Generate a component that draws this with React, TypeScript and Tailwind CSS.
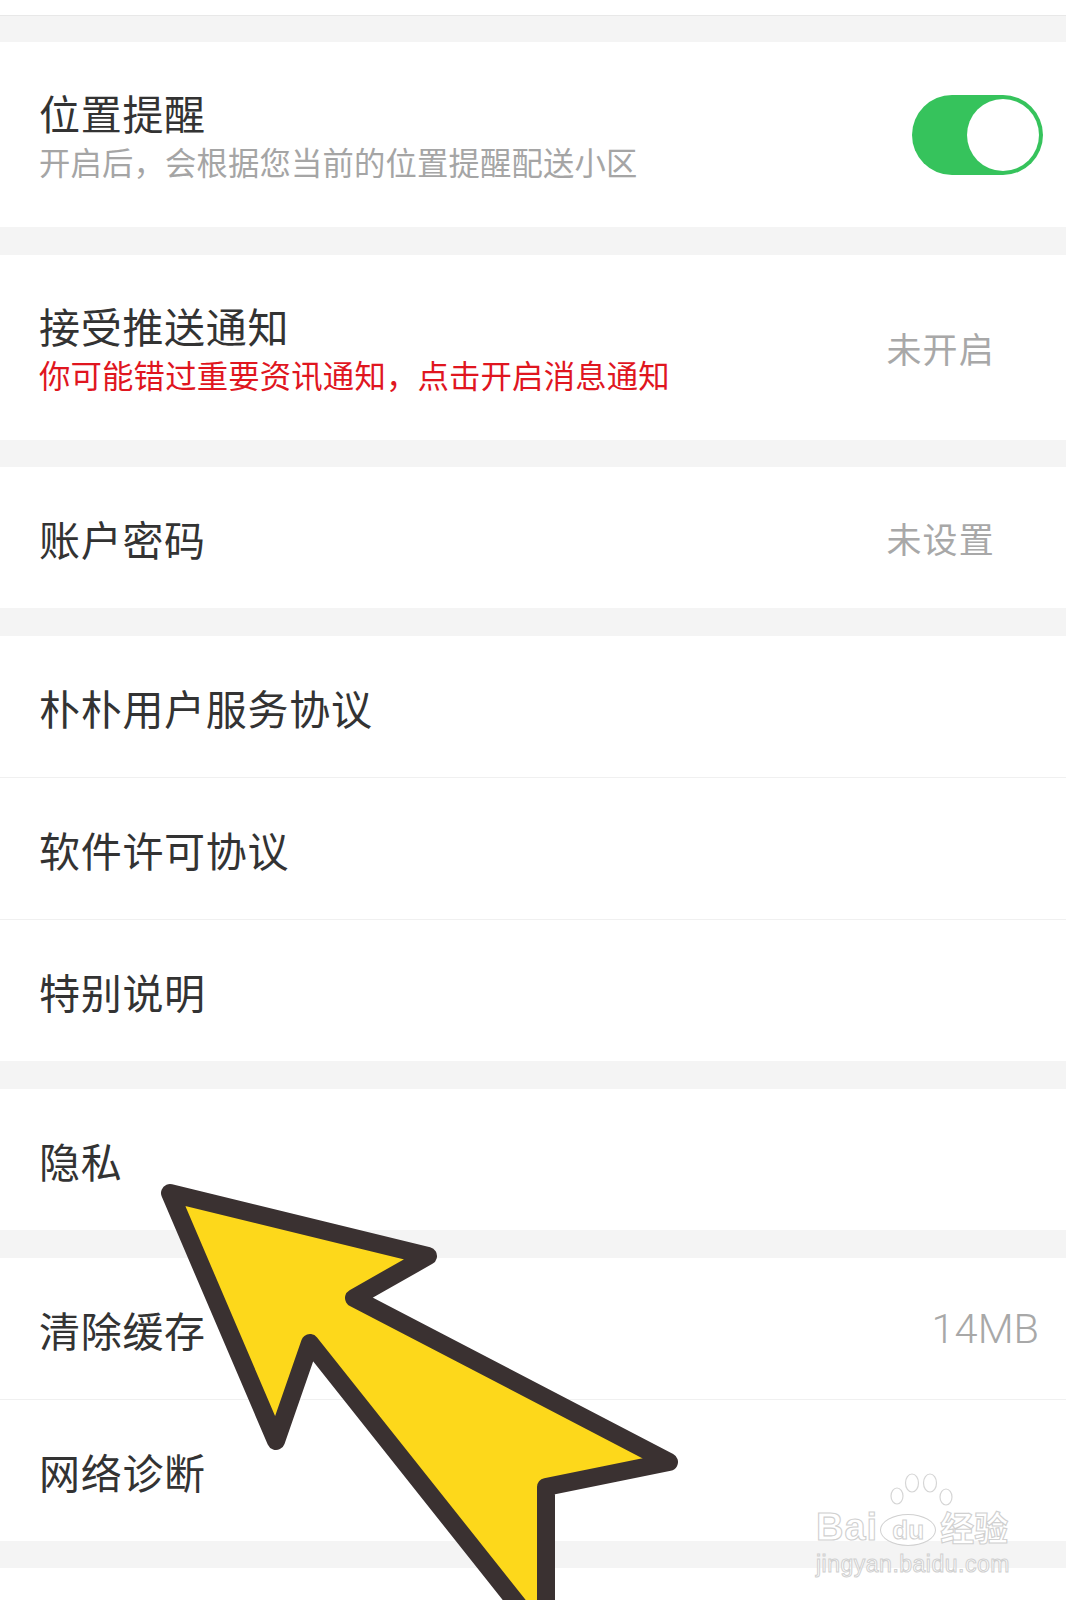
import React from "react";

const Gap = ({ h }: { h: string }) => <div className={`bg-[#f4f4f4] ${h}`} />;

function Row({ title }: { title: string }) {
  return (
    <div className="flex h-[141px] items-center justify-between bg-white pl-[39px]">
      <span className="text-[41px] leading-[48px] tracking-[0.7px] text-[#333333]">{title}</span>
    </div>
  );
}

const Divider = () => <div className="h-px bg-[#f0f0f0]" />;

export default function App() {
  return (
    <div className="relative min-h-[1600px] w-[1066px] overflow-hidden bg-white font-['Noto_Sans_CJK_SC','Noto_Sans',sans-serif]">
      <div className="h-[15px] bg-white" />
      <div className="h-px bg-[#e8e8e8]" />
      <Gap h="h-[26px]" />

      {/* 位置提醒 */}
      <div className="flex h-[185px] items-center justify-between bg-white pl-[39px] pr-[23px]">
        <div className="flex flex-col">
          <span className="text-[41px] leading-[48px] tracking-[0.7px] text-[#333333]">位置提醒</span>
          <span className="mt-[7px] text-[31.3px] leading-[38px] tracking-[0.2px] text-[#a5a5a5]">开启后，会根据您当前的位置提醒配送小区</span>
        </div>
        <div className="flex h-[80px] w-[131px] items-center justify-end rounded-full bg-[#36c35c] pr-[4px]">
          <div className="h-[72px] w-[72px] rounded-full bg-white" />
        </div>
      </div>

      <Gap h="h-[28px]" />

      {/* 接受推送通知 */}
      <div className="flex h-[185px] items-center justify-between bg-white pl-[39px] pr-[71px]">
        <div className="flex flex-col">
          <span className="text-[41px] leading-[48px] tracking-[0.7px] text-[#333333]">接受推送通知</span>
          <span className="mt-[7px] text-[31.4px] leading-[38px] tracking-[0.15px] text-[#e0161f]">你可能错过重要资讯通知，点击开启消息通知</span>
        </div>
        <span className="text-[35px] leading-[42px] tracking-[1.2px] text-[#a8a8a8]">未开启</span>
      </div>

      <Gap h="h-[27px]" />

      <div className="flex h-[141px] items-center justify-between bg-white pl-[39px] pr-[71px]">
        <span className="text-[41px] leading-[48px] tracking-[0.7px] text-[#333333]">账户密码</span>
        <span className="text-[35px] leading-[42px] tracking-[1.2px] text-[#a8a8a8]">未设置</span>
      </div>

      <Gap h="h-[28px]" />

      <Row title="朴朴用户服务协议" />
      <Divider />
      <Row title="软件许可协议" />
      <Divider />
      <Row title="特别说明" />

      <Gap h="h-[28px]" />

      <Row title="隐私" />

      <Gap h="h-[28px]" />

      <div className="flex h-[141px] items-center justify-between bg-white pl-[39px] pr-[27px]">
        <span className="text-[41px] leading-[48px] tracking-[0.7px] text-[#333333]">清除缓存</span>
        <span className="font-['Roboto',sans-serif] text-[41.5px] font-light leading-[48px] text-[#a8a8a8]">14MB</span>
      </div>
      <Divider />
      <Row title="网络诊断" />

      <Gap h="h-[27px]" />
      <div className="h-[40px] bg-white" />

      {/* watermark */}
      <div className="pointer-events-none absolute left-[816px] top-[1478px] w-[200px]">
        <svg className="absolute left-[72px] top-[-6px]" width="68" height="42" viewBox="0 0 68 42" fill="none" stroke="#d6d6d6" strokeWidth="1.2">
          <ellipse cx="9" cy="24" rx="6" ry="8" />
          <ellipse cx="24" cy="11" rx="6.5" ry="9" />
          <ellipse cx="42" cy="11" rx="6.5" ry="9" />
          <ellipse cx="58" cy="25" rx="6" ry="8" />
        </svg>
        <div className="flex items-end">
          <span className="mt-[30px] font-['Liberation_Sans',sans-serif] text-[38px] font-bold leading-[38px] tracking-[1px] text-white [-webkit-text-stroke:1.1px_#d0d0d0]">Bai</span>
          <span className="ml-[2px] flex h-[32px] w-[56px] items-center justify-center rounded-[50%] border border-[#d0d0d0] bg-white font-['Liberation_Sans',sans-serif] text-[26px] font-bold leading-[26px] text-white [-webkit-text-stroke:1px_#d0d0d0]">du</span>
          <span className="ml-[4px] text-[34px] font-bold leading-[38px] text-white [-webkit-text-stroke:1.1px_#d0d0d0]">经验</span>
        </div>
        <div className="mt-[6px] font-['Liberation_Sans',sans-serif] text-[23px] leading-[24px] tracking-[0.5px] text-white [-webkit-text-stroke:1px_#d0d0d0]">jingyan.baidu.com</div>
      </div>

      {/* arrow annotation */}
      <svg className="pointer-events-none absolute left-0 top-0" width="1066" height="1600" viewBox="0 0 1066 1600">
        <polygon
          points="170,1193 428,1256 354,1298 669,1462 546,1487 546,1640 310,1343 276,1441"
          fill="#fdd81b"
          stroke="#3a3131"
          strokeWidth="18"
          strokeLinejoin="round"
        />
      </svg>
    </div>
  );
}
